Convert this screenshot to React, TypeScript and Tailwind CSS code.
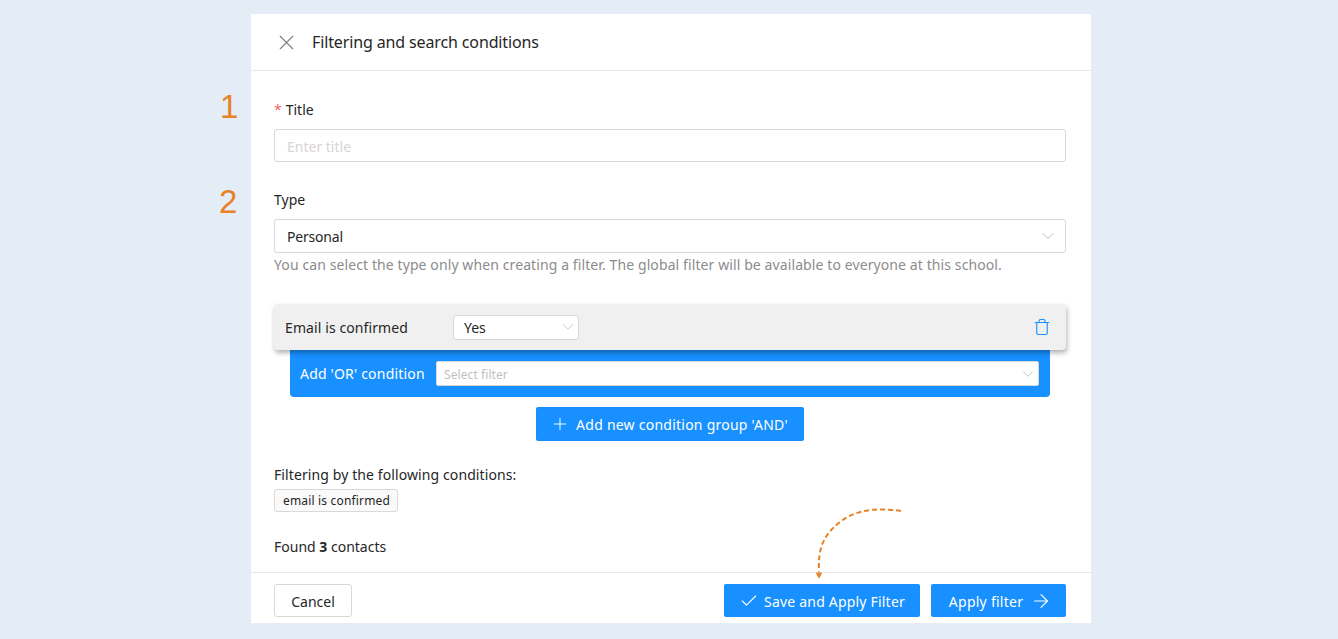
import React from 'react';
import { X, Check, Plus, ArrowRight, ChevronDown, Trash } from 'lucide-react';

const font = "font-['Noto_Sans','Open_Sans',sans-serif]";

function Label({ children, required }: { children: React.ReactNode; required?: boolean }) {
  return (
    <div className="h-[20px] flex items-center text-[14px] text-[#262626] -translate-y-px">
      {required && <span className="text-[#f5222d] mr-[4px] text-[14px] font-light">*</span>}
      {children}
    </div>
  );
}

export default function App() {
  return (
    <div className={`relative h-[639px] overflow-hidden bg-[#e4ecf6] pt-[14px] pl-[251px] ${font}`}>
      {/* Annotations */}
      <div className="absolute left-[220px] top-[85px] text-[33px] leading-[44px] text-[#e98127] font-['Liberation_Sans',sans-serif]">1</div>
      <div className="absolute left-[219px] top-[180px] text-[33px] leading-[44px] text-[#e98127] font-['Liberation_Sans',sans-serif]">2</div>
      <svg className="absolute left-[810px] top-[504px]" width="100" height="76" viewBox="0 0 100 76" fill="none">
        <path d="M91 7 C70 4 48 4 30 18 C12 32 8 46 9 68" stroke="#e98127" strokeWidth="2" strokeDasharray="5 3" />
        <path d="M6.5 69 L11.5 69 L9 74 Z" fill="#e98127" stroke="#e98127" />
      </svg>

      {/* Panel */}
      <div className="w-[840px] h-[609px] bg-white flex flex-col">
        <div className="h-[57px] flex items-center pl-[23px] border-b border-[#e8e8e8] shrink-0">
          <X size={25} strokeWidth={1.1} className="text-[#808080]" />
          <span className="ml-[13px] text-[16px] tracking-[-0.13px] text-[#262626]">Filtering and search conditions</span>
        </div>

        <div className="flex-1 pl-[23px] pr-[25px] pt-[29px]">
          <Label required>Title</Label>
          <div className="mt-[9px] h-[33px] border border-[#d9d9d9] rounded-[3px] flex items-center px-[12px] text-[14px] text-[#d9d4d4]">
            <span className="translate-y-px">Enter title</span>
          </div>

          <div className="mt-[28px]">
            <Label>Type</Label>
          </div>
          <div className="mt-[9px] h-[34px] border border-[#d9d9d9] rounded-[3px] flex items-center justify-between pl-[12px] pr-[7px] text-[14px] tracking-[-0.2px] text-[#262626]">
            Personal
            <ChevronDown size={20} strokeWidth={0.8} className="text-[#999999]" />
          </div>
          <p className="mt-[2px] h-[20px] text-[14px] leading-[20px] tracking-[0.1px] text-[#8c8c8c] whitespace-nowrap">
            You can select the type only when creating a filter. The global filter will be available to everyone at this school.
          </p>

          {/* Condition group */}
          <div className="mt-[29px] relative z-10 h-[46px] bg-[#f0f0f0] rounded-[4px] shadow-[1px_3px_5px_rgba(0,0,0,0.3)] flex items-center pl-[11px] pr-[15px] text-[14px] text-[#262626]">
            <span className="w-[168px] tracking-[0.1px]">Email is confirmed</span>
            <div className="w-[126px] h-[25px] bg-white border border-[#d9d9d9] rounded-[3px] flex items-center justify-between pl-[10px] pr-[1px]">
              Yes
              <ChevronDown size={18} strokeWidth={0.9} className="text-[#aaaaaa]" />
            </div>
            <Trash size={18} strokeWidth={1.5} className="ml-auto text-[#1890ff]" />
          </div>
          <div className="mx-[16px] h-[47px] bg-[#1890ff] rounded-b-[4px] flex items-center pl-[10px] pr-[11px]">
            <span className="w-[136px] text-[14px] tracking-[0.2px] text-white whitespace-nowrap">Add 'OR' condition</span>
            <div className="flex-1 h-[25px] bg-white border border-[#d9d9d9] rounded-[2px] flex items-center justify-between pl-[7px] pr-[1px] text-[12px] tracking-[0.08px] text-[#bfbfbf]">
              <span className="translate-y-px">Select filter</span>
              <ChevronDown size={18} strokeWidth={0.9} className="text-[#aaaaaa]" />
            </div>
          </div>

          <div className="mt-[10px] flex justify-center">
            <div className="w-[268px] h-[34px] bg-[#1890ff] rounded-[2px] flex items-center justify-center gap-[6px] pr-[2px] text-[14px] tracking-[0.24px] text-white">
              <Plus size={20} strokeWidth={1.1} />
              Add new condition group 'AND'
            </div>
          </div>

          <div className="mt-[24px] h-[20px] text-[14px] leading-[20px] tracking-[0.1px] text-[#262626]">Filtering by the following conditions:</div>
          <div className="mt-[4px] w-[124px] h-[23px] pl-[8px] bg-[#fafafa] border border-[#d9d9d9] rounded-[3px] flex items-center text-[12px] tracking-[0.17px] text-[#262626] whitespace-nowrap">
            email is confirmed
          </div>

          <div className="mt-[25px] h-[20px] text-[14px] leading-[20px] text-[#262626]">
            Found <b>3</b> contacts
          </div>
        </div>

        {/* Footer */}
        <div className="h-[51px] border-t border-[#e8e8e8] flex items-start justify-between pt-[11px] pl-[23px] pr-[25px] shrink-0">
          <div className="w-[78px] h-[33px] border border-[#d9d9d9] rounded-[3px] flex items-center justify-center text-[14px] text-[#262626]">
            <span className="translate-y-px">Cancel</span>
          </div>
          <div className="flex gap-[11px]">
            <div className="w-[196px] h-[33px] bg-[#1890ff] rounded-[2px] flex items-center justify-center gap-[5px] text-[14px] tracking-[0.2px] text-white">
              <Check size={20} strokeWidth={1.3} />
              <span className="translate-y-px">Save and Apply Filter</span>
            </div>
            <div className="w-[135px] h-[33px] bg-[#1890ff] rounded-[2px] flex items-center justify-center gap-[7px] pl-[4px] text-[14px] tracking-[0.25px] text-white">
              <span className="translate-y-px">Apply filter</span>
              <ArrowRight size={22} strokeWidth={1.2} />
            </div>
          </div>
        </div>
      </div>
    </div>
  );
}
